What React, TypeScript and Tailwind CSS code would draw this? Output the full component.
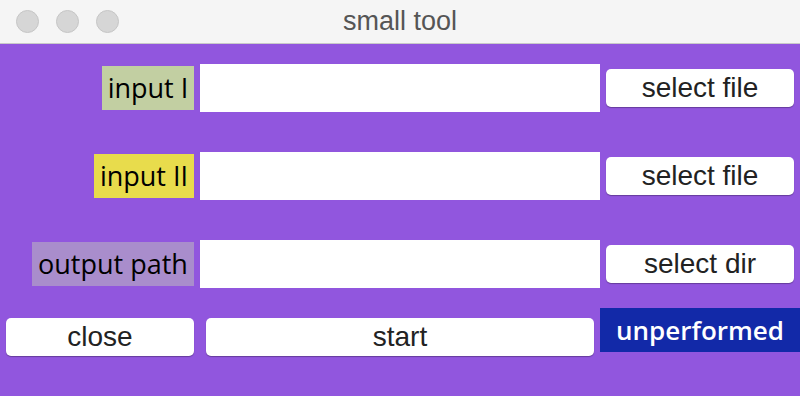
import React from "react";

type Row = {
  label: string;
  labelClass: string;
  button: string;
};

const rows: Row[] = [
  { label: "input I", labelClass: "bg-[#c2cfa2] w-[92px]", button: "select file" },
  { label: "input II", labelClass: "bg-[#e8dc4c] w-[100px]", button: "select file" },
  { label: "output path", labelClass: "bg-[#a98dcc] w-[162px]", button: "select dir" },
];

function MacButton({ children, className = "" }: { children: React.ReactNode; className?: string }) {
  return (
    <button
      className={
        "flex h-[38px] items-center justify-center rounded-[5px] bg-white text-[28px] text-[#222] shadow-[0_1px_1px_rgba(0,0,0,0.3)] " +
        className
      }
      style={{ fontFamily: '"Liberation Sans", Arial, sans-serif' }}
    >
      {children}
    </button>
  );
}

export default function App() {
  return (
    <div className="flex h-[396px] w-[800px] flex-col overflow-hidden bg-[#9156de]">
      {/* title bar */}
      <div className="relative flex h-[44px] shrink-0 items-center border-b border-[#c9c9c9] bg-[#f5f5f5]">
        <div className="flex gap-[17px] pl-[16px]">
          <span className="h-[23px] w-[23px] rounded-full border border-[#c6c6c6] bg-[#d6d6d6]" />
          <span className="h-[23px] w-[23px] rounded-full border border-[#c6c6c6] bg-[#d6d6d6]" />
          <span className="h-[23px] w-[23px] rounded-full border border-[#c6c6c6] bg-[#d6d6d6]" />
        </div>
        <div
          className="absolute inset-0 flex items-center justify-center text-[27px] text-[#555]"
          style={{ fontFamily: '"Liberation Sans", Arial, sans-serif' }}
        >
          small tool
        </div>
      </div>

      <div className="flex flex-col gap-[40px] pt-[20px]">
        {rows.map((row) => (
          <div key={row.label} className="flex h-[48px] items-center">
            <div className="flex w-[194px] justify-end">
              <div
                className={
                  "flex h-[44px] items-center justify-center text-[27px] text-black " + row.labelClass
                }
                style={{ fontFamily: '"Open Sans", sans-serif' }}
              >
                {row.label}
              </div>
            </div>
            <div className="ml-[6px] h-[48px] w-[400px] bg-white" />
            <MacButton className="ml-[6px] w-[188px]">{row.button}</MacButton>
          </div>
        ))}
      </div>

      <div className="mt-[20px] flex items-start">
        <MacButton className="ml-[6px] mt-[10px] w-[188px]">close</MacButton>
        <MacButton className="ml-[12px] mt-[10px] w-[388px]">start</MacButton>
        <div
          className="ml-[6px] flex h-[44px] w-[200px] items-center justify-center bg-[#1229a8] text-[26px] font-semibold text-white"
          style={{ fontFamily: '"Open Sans", sans-serif' }}
        >
          unperformed
        </div>
      </div>
    </div>
  );
}
